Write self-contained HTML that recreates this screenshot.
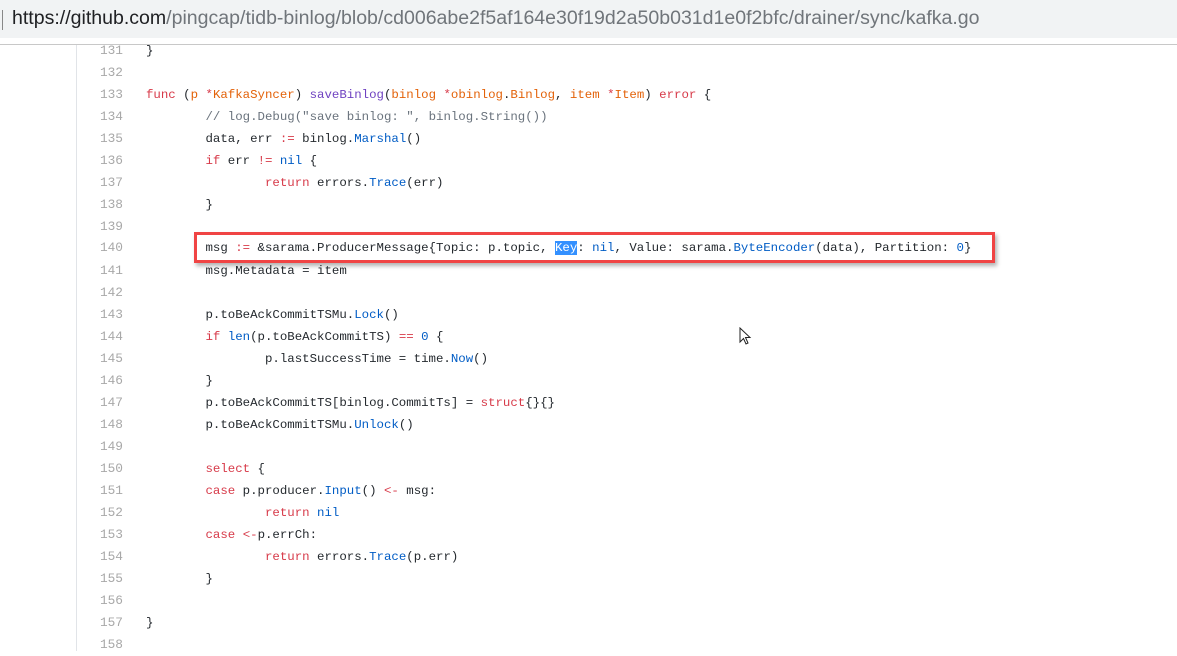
<!DOCTYPE html>
<html><head><style>
body{margin:0;width:1177px;height:651px;overflow:hidden;background:#fff;position:relative;font-family:"Liberation Mono",monospace}
.bar{position:absolute;left:0;top:0;width:1177px;height:38px;background:#f1f3f4;}
.bar .sep{position:absolute;left:2px;top:10px;width:1px;height:20px;background:#888}
.bar .url{position:absolute;left:12px;top:7px;font:19.55px "Liberation Sans",sans-serif;color:#70757a;white-space:nowrap}
.bar .url b{font-weight:normal;color:#202124}
.hr{position:absolute;left:0;top:44px;width:1177px;height:1px;background:#c8c8c8}
.gut{position:absolute;left:76px;top:45px;width:1px;height:606px;background:#e1e4e8}
.ln{position:absolute;left:80px;width:43px;text-align:right;font-size:12.8px;color:#a8a8a8;line-height:22px}
.cd{position:absolute;left:146px;font-size:12.4px;color:#24292e;line-height:22px;white-space:pre}
.k{color:#d73a49}.f{color:#6f42c1}.o{color:#e36209}.b{color:#005cc5}.c{color:#6a737d}
.sel{background:#3390ff;color:#fff}
.box{position:absolute;left:194px;top:232px;width:795px;height:25px;border:3px solid #f04444;box-shadow:2px 3px 4px rgba(0,0,0,.3)}
</style></head><body>
<div class="bar"><div class="sep"></div><div class="url"><b>https://github.com</b>/pingcap/tidb-binlog/blob/cd006abe2f5af164e30f19d2a50b031d1e0f2bfc/drainer/sync/kafka.go</div></div>
<div class="hr"></div>
<div class="gut"></div>
<div class="ln" style="top:40px">131</div><div class="cd" style="top:40px">}</div>
<div class="ln" style="top:62px">132</div>
<div class="ln" style="top:84px">133</div><div class="cd" style="top:84px"><span class="k">func</span> (<span class="o">p</span> <span class="k">*</span><span class="o">KafkaSyncer</span>) <span class="f">saveBinlog</span>(<span class="o">binlog</span> <span class="k">*</span><span class="o">obinlog</span>.<span class="o">Binlog</span>, <span class="o">item</span> <span class="k">*</span><span class="o">Item</span>) <span class="k">error</span> {</div>
<div class="ln" style="top:106px">134</div><div class="cd" style="top:106px">        <span class="c">// log.Debug("save binlog: ", binlog.String())</span></div>
<div class="ln" style="top:128px">135</div><div class="cd" style="top:128px">        data, err <span class="k">:=</span> binlog.<span class="b">Marshal</span>()</div>
<div class="ln" style="top:150px">136</div><div class="cd" style="top:150px">        <span class="k">if</span> err <span class="k">!=</span> <span class="b">nil</span> {</div>
<div class="ln" style="top:172px">137</div><div class="cd" style="top:172px">                <span class="k">return</span> errors.<span class="b">Trace</span>(err)</div>
<div class="ln" style="top:194px">138</div><div class="cd" style="top:194px">        }</div>
<div class="ln" style="top:216px">139</div>
<div class="ln" style="top:237px">140</div><div class="cd" style="top:237px">        msg <span class="k">:=</span> &amp;sarama.ProducerMessage{Topic: p.topic, <span class="sel">Key</span>: <span class="b">nil</span>, Value: sarama.<span class="b">ByteEncoder</span>(data), Partition: <span class="b">0</span>}</div>
<div class="ln" style="top:260px">141</div><div class="cd" style="top:260px">        msg.Metadata = item</div>
<div class="ln" style="top:282px">142</div>
<div class="ln" style="top:304px">143</div><div class="cd" style="top:304px">        p.toBeAckCommitTSMu.<span class="b">Lock</span>()</div>
<div class="ln" style="top:326px">144</div><div class="cd" style="top:326px">        <span class="k">if</span> <span class="b">len</span>(p.toBeAckCommitTS) <span class="k">==</span> <span class="b">0</span> {</div>
<div class="ln" style="top:348px">145</div><div class="cd" style="top:348px">                p.lastSuccessTime = time.<span class="b">Now</span>()</div>
<div class="ln" style="top:370px">146</div><div class="cd" style="top:370px">        }</div>
<div class="ln" style="top:392px">147</div><div class="cd" style="top:392px">        p.toBeAckCommitTS[binlog.CommitTs] = <span class="k">struct</span>{}{}</div>
<div class="ln" style="top:414px">148</div><div class="cd" style="top:414px">        p.toBeAckCommitTSMu.<span class="b">Unlock</span>()</div>
<div class="ln" style="top:436px">149</div>
<div class="ln" style="top:458px">150</div><div class="cd" style="top:458px">        <span class="k">select</span> {</div>
<div class="ln" style="top:480px">151</div><div class="cd" style="top:480px">        <span class="k">case</span> p.producer.<span class="b">Input</span>() <span class="k">&lt;-</span> msg:</div>
<div class="ln" style="top:502px">152</div><div class="cd" style="top:502px">                <span class="k">return</span> <span class="b">nil</span></div>
<div class="ln" style="top:524px">153</div><div class="cd" style="top:524px">        <span class="k">case</span> <span class="k">&lt;-</span>p.errCh:</div>
<div class="ln" style="top:546px">154</div><div class="cd" style="top:546px">                <span class="k">return</span> errors.<span class="b">Trace</span>(p.err)</div>
<div class="ln" style="top:568px">155</div><div class="cd" style="top:568px">        }</div>
<div class="ln" style="top:590px">156</div>
<div class="ln" style="top:612px">157</div><div class="cd" style="top:612px">}</div>
<div class="ln" style="top:634px">158</div>
<div class="box"></div>
<svg style="position:absolute;left:739px;top:327px" width="14" height="20" viewBox="0 0 14 20"><path d="M1 1 L1 15 L4.5 11.5 L7 17 L9 16 L6.5 10.5 L11 10.5 Z" fill="#fff" stroke="#222" stroke-width="1"/></svg>
</body></html>
